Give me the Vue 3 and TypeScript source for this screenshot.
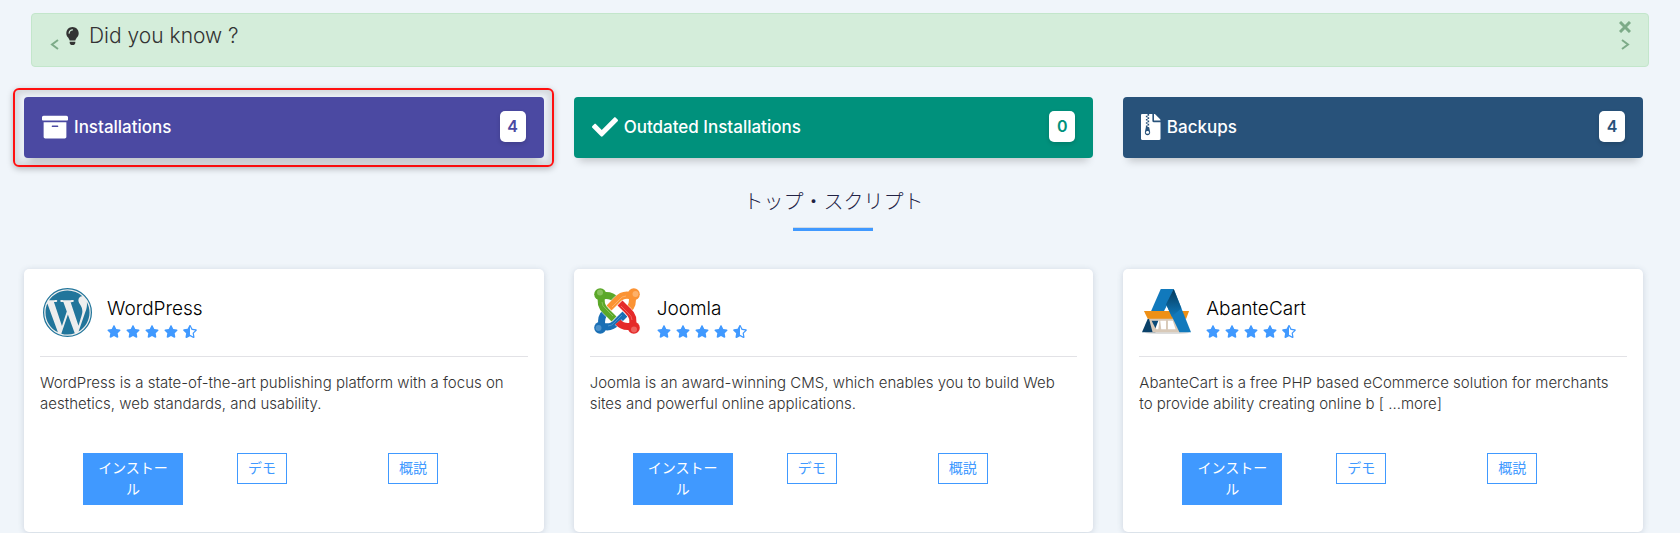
<script setup lang="ts">
import { ref } from 'vue'

interface Stat {
  label: string
  count: number
  tone: string
  viewBox: string
  icon: string
  highlighted?: boolean
}

interface Script {
  id: string
  name: string
  description: string
}

const showTip = ref(true)

const stats: Stat[] = [
  {
    label: 'Installations',
    count: 4,
    tone: 'purple',
    viewBox: '0 0 512 512',
    highlighted: true,
    icon: 'M32 448c0 17.7 14.3 32 32 32h384c17.7 0 32-14.3 32-32V160H32v288zm160-212c0-6.6 5.4-12 12-12h104c6.6 0 12 5.4 12 12v8c0 6.6-5.4 12-12 12H204c-6.6 0-12-5.4-12-12v-8zM480 32H32C14.3 32 0 46.3 0 64v48c0 8.8 7.2 16 16 16h480c8.8 0 16-7.2 16-16V64c0-17.7-14.3-32-32-32z',
  },
  {
    label: 'Outdated Installations',
    count: 0,
    tone: 'green',
    viewBox: '0 0 512 512',
    icon: 'M173.898 439.404l-166.4-166.4c-9.997-9.997-9.997-26.206 0-36.204l36.203-36.204c9.997-9.998 26.207-9.998 36.204 0L192 312.69 432.095 72.596c9.997-9.997 26.207-9.997 36.204 0l36.203 36.204c9.997 9.997 9.997 26.206 0 36.204l-294.4 294.401c-9.998 9.997-26.207 9.997-36.204-.001z',
  },
  {
    label: 'Backups',
    count: 4,
    tone: 'navy',
    viewBox: '0 0 384 512',
    icon: 'M377 105L279.1 7c-4.5-4.5-10.6-7-17-7H256v128h128v-6.1c0-6.3-2.5-12.4-7-16.9zM128.4 336c-17.9 0-32.4 12.1-32.4 27 0 15 14.6 27 32.5 27s32.4-12.1 32.4-27-14.6-27-32.5-27zM224 136V0h-63.6v32h-32V0H24C10.7 0 0 10.7 0 24v464c0 13.3 10.7 24 24 24h336c13.3 0 24-10.7 24-24V160H248c-13.2 0-24-10.8-24-24zM95.9 32h32v32h-32zm32.3 384c-33.2 0-58-30.4-51.4-62.9L96.4 256v-32h32v-32h-32v-32h32v-32h-32V96h32V64h32v32h-32v32h32v32h-32v32h32v32h-32v32h22.1c5.7 0 10.7 4.1 11.8 9.7l17.3 87.7c6.4 32.4-18.4 62.6-51.4 62.6z',
  },
]

const scripts: Script[] = [
  {
    id: 'wordpress',
    name: 'WordPress',
    description: 'WordPress is a state-of-the-art publishing platform with a focus on aesthetics, web standards, and usability.',
  },
  {
    id: 'joomla',
    name: 'Joomla',
    description: 'Joomla is an award-winning CMS, which enables you to build Web sites and powerful online applications.',
  },
  {
    id: 'abantecart',
    name: 'AbanteCart',
    description: 'AbanteCart is a free PHP based eCommerce solution for merchants to provide ability creating online b [ ...more]',
  },
]

const joomlaArms = [
  { color: '#1a6fb5', light: '#7db4e0', angle: 270 },
  { color: '#5ba829', light: '#b4dc90', angle: 0 },
  { color: '#fb9334', light: '#ffd0a0', angle: 90 },
  { color: '#e52a2a', light: '#f79a90', angle: 180 },
]
</script>

<template>
  <main class="page">
    <section v-if="showTip" class="tip">
      <button class="tip-btn prev" type="button" aria-label="Previous tip">
        <svg viewBox="0 0 9 11"><path d="M8 1 2 5.500 8 10" /></svg>
      </button>
      <svg class="bulb" viewBox="0 0 352 512" aria-hidden="true"><path d="M96.06 454.35c.01 6.29 1.87 12.45 5.36 17.69l17.09 25.69a31.99 31.99 0 0 0 26.64 14.28h61.71a31.99 31.99 0 0 0 26.64-14.28l17.09-25.69a31.989 31.989 0 0 0 5.36-17.69l.04-38.35H96.01l.05 38.35zM0 176c0 44.37 16.45 84.85 43.56 115.78 16.52 18.85 42.36 58.23 52.21 91.45.04.26.07.52.11.78h160.24c.04-.26.07-.51.11-.78 9.85-33.22 35.69-72.6 52.21-91.45C335.55 260.85 352 220.37 352 176 352 78.61 272.91-.3 175.45 0 73.44.31 0 82.97 0 176zm176-80c-44.11 0-80 35.89-80 80 0 8.84-7.16 16-16 16s-16-7.16-16-16c0-61.76 50.24-112 112-112 8.84 0 16 7.16 16 16s-7.16 16-16 16z" /></svg>
      <h2 class="tip-title">Did you know ?</h2>
      <div class="tip-side">
        <button class="tip-btn close" type="button" aria-label="Close" @click="showTip = false">
          <svg viewBox="0 0 12 12"><path d="M1 1l10 10M11 1L1 11" /></svg>
        </button>
        <button class="tip-btn" type="button" aria-label="Next tip">
          <svg viewBox="0 0 9 11"><path d="M1 1l6 4.500L1 10" /></svg>
        </button>
      </div>
    </section>

    <nav class="grid stats">
      <a v-for="stat in stats" :key="stat.label" href="#" class="stat" :class="[stat.tone, { highlighted: stat.highlighted }]">
        <svg class="stat-icon" :viewBox="stat.viewBox" aria-hidden="true"><path :d="stat.icon" /></svg>
        <span class="stat-label">{{ stat.label }}</span>
        <span class="badge">{{ stat.count }}</span>
      </a>
    </nav>

    <h1 class="heading">トップ・スクリプト</h1>

    <section class="grid">
      <article v-for="item in scripts" :key="item.id" class="card">
        <header class="card-head">
          <svg v-if="item.id === 'wordpress'" class="logo" viewBox="0 0 24 24" aria-hidden="true">
            <circle cx="12" cy="12" r="11.700" fill="#eeeeee" stroke="#21759b" stroke-width=".6" />
            <path fill="#21759b" d="M21.469 6.825c.84 1.537 1.318 3.3 1.318 5.175 0 3.979-2.156 7.456-5.363 9.325l3.295-9.527c.615-1.54.82-2.771.82-3.864 0-.405-.026-.78-.07-1.109m-7.981.105c.647-.03 1.232-.105 1.232-.105.582-.075.514-.93-.067-.899 0 0-1.755.135-2.88.135-1.064 0-2.85-.15-2.85-.15-.585-.03-.661.855-.075.885 0 0 .54.061 1.125.09l1.68 4.605-2.37 7.08L5.354 6.9c.649-.03 1.234-.1 1.234-.1.585-.075.516-.93-.065-.896 0 0-1.746.138-2.874.138-.2 0-.438-.008-.69-.015C4.911 3.15 8.235 1.215 12 1.215c2.809 0 5.365 1.072 7.286 2.833-.046-.003-.091-.009-.141-.009-1.06 0-1.812.923-1.812 1.914 0 .89.513 1.643 1.06 2.531.411.72.89 1.643.89 2.977 0 .915-.354 1.994-.821 3.479l-1.075 3.585-3.9-11.61zM12 22.784c-1.059 0-2.081-.153-3.048-.437l3.237-9.406 3.315 9.087c.024.053.05.101.078.149-1.12.393-2.325.609-3.582.609M1.211 12c0-1.564.336-3.05.935-4.39L7.29 21.709C3.694 19.96 1.212 16.271 1.211 12" />
          </svg>
          <svg v-else-if="item.id === 'joomla'" class="logo" viewBox="-1 0 49 49" aria-hidden="true">
            <g v-for="arm in joomlaArms" :key="arm.angle" :transform="`rotate(${arm.angle} 23 23)`">
              <path d="M8 8Q17 6 22 12M8 8Q5 17 12 23L20 31" fill="none" stroke="#ffffff" stroke-width="8.500" opacity=".55" />
              <path d="M8 8Q17 6 22 12M8 8Q5 17 12 23L20 31" fill="none" :stroke="arm.color" stroke-width="7" />
              <circle cx="6.200" cy="6.200" r="6" :fill="arm.color" />
              <path d="M8 14Q8 18 12 21L19 28" fill="none" :stroke="arm.light" stroke-width="1" opacity=".5" />
              <circle cx="6" cy="4.500" r="3" :fill="arm.light" opacity=".5" />
            </g>
          </svg>
          <svg v-else class="logo" viewBox="0 0 51 49" aria-hidden="true">
            <defs>
              <linearGradient id="fold" x1="0" y1="0" x2="0" y2="1">
                <stop offset="0" stop-color="#06395a" />
                <stop offset="1" stop-color="#0f78ba" />
              </linearGradient>
            </defs>
            <ellipse cx="26" cy="45.500" rx="23" ry="1.500" fill="#dcdcdc" />
            <path d="M0 45 6 31h3l5 14z" fill="#0a4169" />
            <path d="M7 30h31l2 15H11z" fill="#d8c9b8" />
            <path d="M11 33h7l-1 9h-2zM19 33h6v9h-5zM27 33h5l3 9h-8z" fill="#ffffff" />
            <path d="M10 33h7l-3 8z" fill="#0a4a78" />
            <path d="M2 23h47l-3 8H6z" fill="#ee9016" />
            <path d="M19.500 0H33l-7 17-3 6H9.500z" fill="#1179bc" />
            <path d="M33 0l18 45H39L25 16z" fill="#1179bc" />
            <path d="M33 0 25 16l6 13 10-9z" fill="url(#fold)" />
          </svg>
          <div>
            <h3 class="name">{{ item.name }}</h3>
            <div class="stars" role="img" aria-label="4.5 / 5">
              <svg v-for="n in 4" :key="n" viewBox="0 0 576 512"><path d="M259.3 17.8L194 150.2 47.9 171.5c-26.2 3.8-36.7 36.1-17.7 54.6l105.7 103-25 145.5c-4.5 26.3 23.2 46 46.4 33.7L288 439.6l130.7 68.7c23.2 12.2 50.9-7.4 46.4-33.7l-25-145.5 105.7-103c19-18.5 8.5-50.8-17.7-54.6L382 150.2 316.7 17.8c-11.7-23.6-45.6-23.9-57.4 0z" /></svg>
              <svg viewBox="0 0 536 512"><path d="M508.55 171.51L362.18 150.2 296.77 17.81C290.89 5.98 279.42 0 267.95 0c-11.4 0-22.79 5.9-28.69 17.81l-65.43 132.38-146.38 21.29c-26.25 3.8-36.77 36.09-17.74 54.59l105.89 103-25.06 145.48C86.98 495.33 103.57 512 122.15 512c4.93 0 10-1.17 14.87-3.75l130.95-68.68 130.94 68.7c4.86 2.55 9.92 3.71 14.83 3.71 18.6 0 35.22-16.61 31.66-37.4l-25.03-145.49 105.91-102.98c19.04-18.5 8.52-50.8-17.73-54.6zm-121.74 123.2l-18.12 17.62 4.28 24.88 19.52 113.45-102.13-53.59-22.38-11.74.03-317.19 51.03 103.29 11.18 22.63 25.01 3.64 114.23 16.63-82.65 80.38z" /></svg>
            </div>
          </div>
        </header>
        <p class="description">{{ item.description }}</p>
        <footer class="actions">
          <button class="btn primary" type="button">インストール</button>
          <button class="btn demo" type="button">デモ</button>
          <button class="btn overview" type="button">概説</button>
        </footer>
      </article>
    </section>
  </main>
</template>

<style>
body {
  background: #f0f5fa;
}
</style>

<style scoped>
* {
  box-sizing: border-box;
}

.page {
  padding: 13px 37px 1px 24px;
  font-family: Inter, "Noto Sans CJK JP", sans-serif;
  font-size: 14px;
  color: #333333;
}

h1,
h2,
h3,
p {
  margin: 0;
  font-weight: 400;
}

button {
  font: inherit;
  cursor: pointer;
}

.tip {
  display: flex;
  align-items: flex-start;
  min-height: 54px;
  margin: 0 -6px 30px 7px;
  padding: 7px 17px 0 18px;
  border: 1px solid #c3e6cb;
  border-radius: 4px;
  background: #d4edda;
}

.tip-btn {
  display: block;
  padding: 0;
  border: 0;
  background: none;
}

.tip-btn svg {
  display: block;
  width: 9px;
  height: 11px;
  fill: none;
  stroke: #7dab88;
  stroke-width: 2;
}

.tip-btn.close svg {
  width: 12px;
  height: 12px;
  stroke-width: 3;
}

.prev {
  margin: 18px 7px 0 0;
}

.bulb {
  width: 13px;
  height: 18px;
  margin: 6px 10px 0 0;
  fill: #333333;
}

.tip-title {
  font-size: 21px;
  font-weight: 300;
  line-height: 30px;
}

.tip-side {
  display: flex;
  flex-direction: column;
  align-items: center;
  gap: 6px;
  margin-left: auto;
}

.grid {
  display: grid;
  grid-template-columns: repeat(3, 1fr);
  gap: 30px;
}

.stats {
  isolation: isolate;
}

.stat {
  position: relative;
  display: flex;
  align-items: center;
  min-height: 61px;
  padding: 0 18px 2px;
  border-radius: 4px;
  color: #ffffff;
  font-size: 17px;
  font-weight: 500;
  text-decoration: none;
  box-shadow: 0 8px 8px -5px rgba(0, 0, 0, 0.2);
}

.purple {
  --tone: #4b49a2;
  background: var(--tone);
}

.green {
  --tone: #00917c;
  background: var(--tone);
}

.navy {
  --tone: #28527a;
  background: var(--tone);
}

.highlighted::after {
  content: "";
  position: absolute;
  z-index: -1;
  inset: -9px -10px -9px -11px;
  border: 2px solid #ff1010;
  border-radius: 6px;
  box-shadow: 0 2px 6px rgba(0, 0, 0, 0.25), inset 0 0 6px 4px rgba(0, 0, 0, 0.12);
}

.stat-icon {
  height: 26px;
  margin-right: 6px;
  fill: #ffffff;
}

.badge {
  min-width: 26px;
  margin-left: auto;
  border-radius: 5px;
  background: #ffffff;
  color: var(--tone);
  font-size: 16px;
  font-weight: 600;
  line-height: 31px;
  text-align: center;
  box-shadow: 0 2px 4px rgba(0, 0, 0, 0.15);
}

.heading {
  position: relative;
  margin: 27px 0 38px;
  padding-bottom: 12px;
  color: #222244;
  font-size: 20px;
  font-weight: 300;
  line-height: 34px;
  text-align: center;
}

.heading::after {
  content: "";
  position: absolute;
  bottom: 0;
  left: 50%;
  width: 80px;
  height: 3px;
  margin-left: -41px;
  border-top: 1px solid #d3dbe3;
  background: #4099ff;
  background-clip: padding-box;
}

.card {
  padding: 16px 16px 26px;
  border-radius: 5px;
  background: #ffffff;
  box-shadow: 0 1px 6px rgba(60, 80, 110, 0.2);
}

.card-head {
  display: flex;
  min-height: 72px;
  padding: 3px 0 0 3px;
  border-bottom: 1px solid #e2e2e6;
}

.logo {
  width: 49px;
  height: 49px;
  margin-right: 15px;
}

.name {
  margin-top: 5px;
  color: #000000;
  font-size: 19px;
  font-weight: 300;
  line-height: 32px;
}

.stars {
  display: flex;
  gap: 5px;
}

.stars svg {
  width: 14px;
  height: 13px;
  fill: #4099ff;
}

.description {
  min-height: 42px;
  margin: 15px 0 39px;
  padding-right: 12px;
  font-size: 15px;
  font-weight: 300;
  line-height: 21px;
}

.actions {
  display: flex;
  align-items: flex-start;
  min-height: 53px;
  padding-left: 43px;
}

.btn {
  width: 50px;
  padding: 3px 9px 5px;
  border: 1px solid #4099ff;
  background: #ffffff;
  color: #4099ff;
  line-height: 21px;
  white-space: nowrap;
}

.primary {
  width: 100px;
  background: #4099ff;
  color: #ffffff;
  white-space: normal;
}

.demo {
  margin-left: 54px;
}

.overview {
  margin-left: 101px;
}
</style>
